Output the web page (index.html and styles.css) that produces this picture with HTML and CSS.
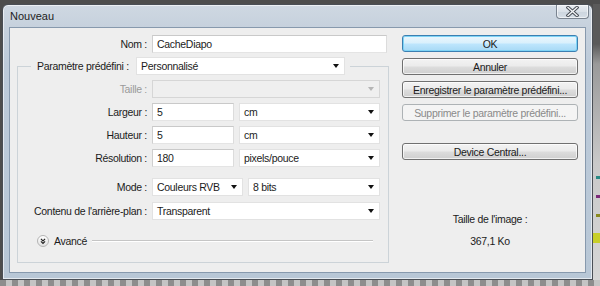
FILE: index.html
```html
<!DOCTYPE html>
<html lang="fr">
<head>
<meta charset="utf-8">
<title>Nouveau</title>
<link rel="stylesheet" href="styles.css">
</head>
<body>
<div class="desktop">
  <div class="top-row">
    <div class="window">
      <div class="titlebar">
        <span class="title">Nouveau</span>
        <div class="close">
          <svg width="13" height="11" viewBox="0 0 13 11"><path d="M2 1.5 L11 9.5 M11 1.5 L2 9.5" stroke="#4a4f57" stroke-width="3.4" stroke-linecap="square" fill="none"/><path d="M2 1.5 L11 9.5 M11 1.5 L2 9.5" stroke="#f4f6f8" stroke-width="1.4" stroke-linecap="square" fill="none"/></svg>
        </div>
      </div>
      <div class="client">
        <div class="left">
          <div class="row">
            <span class="lbl">Nom :</span>
            <div class="field input w-name">CacheDiapo</div>
          </div>
          <fieldset class="group">
            <legend class="legend">
              <div class="legend-inner">
                <span class="legend-lbl">Paramètre prédéfini :</span>
                <div class="field select w-preset">Personnalisé<span class="arrow"></span></div>
              </div>
            </legend>
            <div class="row first">
              <span class="lbl disabled">Taille :</span>
              <div class="field select disabled-field w-full"><span class="arrow grey"></span></div>
            </div>
            <div class="row">
              <span class="lbl">Largeur :</span>
              <div class="field input w-num">5</div>
              <div class="field select w-unit">cm<span class="arrow"></span></div>
            </div>
            <div class="row">
              <span class="lbl">Hauteur :</span>
              <div class="field input w-num">5</div>
              <div class="field select w-unit">cm<span class="arrow"></span></div>
            </div>
            <div class="row">
              <span class="lbl">Résolution :</span>
              <div class="field input w-num">180</div>
              <div class="field select w-unit">pixels/pouce<span class="arrow"></span></div>
            </div>
            <div class="row mode">
              <span class="lbl">Mode :</span>
              <div class="field select w-mode">Couleurs RVB<span class="arrow"></span></div>
              <div class="field select w-bits">8 bits<span class="arrow"></span></div>
            </div>
            <div class="row bg">
              <span class="lbl">Contenu de l'arrière-plan :</span>
              <div class="field select w-full">Transparent<span class="arrow"></span></div>
            </div>
            <div class="advanced">
              <span class="adv-icon">
                <svg width="12" height="12" viewBox="0 0 12 12"><path d="M3.5 3.5 L6 6 L8.5 3.5 M3.5 6.5 L6 9 L8.5 6.5" stroke="#222" stroke-width="1.3" fill="none"/></svg>
              </span>
              <span class="adv-text">Avancé</span>
              <span class="rule"></span>
            </div>
          </fieldset>
        </div>
        <div class="right">
          <div class="btn primary">OK</div>
          <div class="btn">Annuler</div>
          <div class="btn">Enregistrer le paramètre prédéfini...</div>
          <div class="btn disabled-btn">Supprimer le paramètre prédéfini...</div>
          <div class="btn device">Device Central...</div>
          <div class="size-label">Taille de l'image :</div>
          <div class="size-value">367,1 Ko</div>
        </div>
      </div>
    </div>
    <div class="side-strip">
      <span class="mark teal"></span>
      <span class="mark purple"></span>
      <span class="mark olive"></span>
      <span class="mark yellow"></span>
    </div>
  </div>
  <div class="bottom-strip"></div>
</div>
</body>
</html>
```

FILE: styles.css
```css
* { box-sizing: border-box; }
html, body { margin: 0; padding: 0; }
body {
  width: 600px;
  height: 286px;
  overflow: hidden;
  background: #4d4d4d;
  font-family: "Liberation Sans", Arial, sans-serif;
  font-size: 10.5px;
  letter-spacing: -0.3px;
  color: #1b1b1b;
}
.desktop { display: flex; flex-direction: column; height: 286px; }
.top-row { display: flex; padding: 4px 0 0 2px; }

.window {
  width: 591px;
  height: 276px;
  flex: none;
  border: 1px solid #4a4f56;
  border-radius: 6px 6px 0 0;
  background: linear-gradient(180deg, #cfd8e2 0px, #c6d1dd 22px, #bccad9 60px, #b8c7d6 100%);
  box-shadow: inset 0 0 0 1px rgba(255,255,255,0.6);
  display: flex;
  flex-direction: column;
}
.titlebar {
  height: 22px;
  display: flex;
  align-items: flex-start;
  padding-left: 7px;
}
.title {
  font-size: 11px;
  letter-spacing: 0;
  line-height: 20px;
  margin-top: 1px;
  color: #222;
}
.close {
  margin-left: auto;
  margin-right: 3px;
  width: 33px;
  height: 14px;
  border: 1px solid #7a8490;
  border-top: none;
  border-radius: 0 0 4px 4px;
  background: linear-gradient(180deg, #e9edf2, #dae1e8 50%, #ccd5df 51%, #d6dee6);
  box-shadow: inset 0 0 0 1px rgba(255,255,255,0.6);
  display: flex;
  align-items: center;
  justify-content: center;
}

.client {
  flex: 1;
  margin: 0 6px 6px;
  background: #eeeeee;
  border: 1px solid #8799ad;
  display: grid;
  grid-template-columns: 372px 176px;
  column-gap: 13px;
  padding: 7px 7px 0 7px;
  align-items: start;
}

.left { display: flex; flex-direction: column; }
.row {
  display: flex;
  align-items: center;
  gap: 5px;
  height: 18px;
  margin-top: 5px;
}
.left > .row { margin-top: 0; }
.row.first { margin-top: 5px; }
.row.mode { margin-top: 11px; }
.row.bg { margin-top: 6px; }
.lbl {
  width: 130px;
  flex: none;
  text-align: right;
  white-space: nowrap;
}
.group .lbl { width: 129px; }
.lbl.disabled { color: #9a9a9a; }

.field {
  height: 18px;
  flex: none;
  background: #fff;
  border: 1px solid #d4d4d4;
  padding-left: 4px;
  display: flex;
  align-items: center;
  white-space: nowrap;
}
.input { border-color: #c9c9c9 #dcdcdc #e4e4e4 #cfcfcf; }
.select { border-color: #e2e2e2; }
.disabled-field { background: #efefef; border-color: #d6d6d6; }
.w-name { width: 235px; }
.w-preset { width: 209px; }
.w-full { width: 228px; }
.w-num { width: 82px; }
.w-unit { width: 141px; }
.w-mode { width: 91px; }
.w-bits { width: 132px; }
.arrow {
  margin-left: auto;
  margin-right: 5px;
  width: 0;
  height: 0;
  border-left: 3.5px solid transparent;
  border-right: 3.5px solid transparent;
  border-top: 4px solid #111;
}
.arrow.grey { border-top-color: #b5b5b5; }

.group {
  margin: 4px 0 0 0;
  padding: 0 7px 14px 0;
  border: 1px solid #ccd3d8;
  min-width: 0;
}
.legend {
  margin-left: 13px;
  padding: 0 5px 0 6px;
}
.legend-inner {
  display: flex;
  align-items: center;
  gap: 5px;
  height: 18px;
}
.legend-lbl { width: 94px; white-space: nowrap; }

.advanced {
  margin-top: 14px;
  height: 14px;
  display: flex;
  align-items: center;
  padding-left: 19px;
}
.adv-icon {
  width: 12px;
  height: 12px;
  border-radius: 50%;
  border: 1px solid #b4b4b4;
  background: linear-gradient(180deg, #ffffff, #e2e2e2);
  display: flex;
  align-items: center;
  justify-content: center;
}
.adv-icon svg { display: block; }
.adv-text { margin-left: 5px; }
.rule {
  flex: 1;
  margin: 0 8px 0 5px;
  height: 2px;
  border-top: 1px solid #c5c5c5;
  border-bottom: 1px solid #ffffff;
}

.right { display: flex; flex-direction: column; }
.btn {
  height: 17px;
  margin-top: 6px;
  border: 1px solid #707070;
  border-radius: 3px;
  background: linear-gradient(180deg, #f3f3f3 0%, #ebebeb 48%, #dddddd 52%, #cfcfcf 100%);
  box-shadow: inset 0 0 0 1px rgba(255,255,255,0.7);
  display: flex;
  align-items: center;
  justify-content: center;
  white-space: nowrap;
}
.btn.primary {
  margin-top: 0;
  border-color: #3c7fb1;
  background: linear-gradient(180deg, #eaf6fd 0%, #d9f0fc 48%, #bee6fd 52%, #a7d9f5 100%);
  box-shadow: inset 0 0 0 1px #7ed4f6;
}
.btn.disabled-btn {
  border-color: #adb2b5;
  background: #f4f4f4;
  box-shadow: none;
  color: #8a8a8a;
}
.btn.device { margin-top: 22px; }
.size-label {
  margin-top: 52px;
  text-align: center;
  line-height: 14px;
}
.size-value {
  margin-top: 8px;
  text-align: center;
  line-height: 14px;
}

.side-strip {
  flex: 1;
  height: 276px;
  background: linear-gradient(180deg, #5a5a5a 0px, #5a5a5a 40px, #9a9a9a 60px, #c9c9c9 160px, #d6d6d6 100%);
  display: flex;
  flex-direction: column;
  align-items: flex-end;
}
.mark { display: block; width: 4px; height: 3px; }
.mark.teal { margin-top: 172px; background: #2a8a86; }
.mark.purple { margin-top: 16px; background: #7c2b7a; }
.mark.olive { margin-top: 16px; background: #8a8a1e; }
.mark.yellow { margin-top: 16px; width: 7px; height: 10px; background: #c8cf2a; }

.bottom-strip {
  flex: 1;
  background: repeating-linear-gradient(90deg, #8d8d8d 0px, #8d8d8d 6px, #c4c4c4 6px, #c4c4c4 12px);
}
```
